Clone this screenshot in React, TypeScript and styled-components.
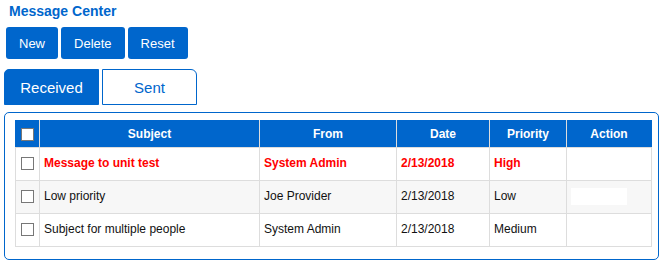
import React from "react";
import styled, { createGlobalStyle } from "styled-components";

const GlobalStyle = createGlobalStyle`
  body {
    margin: 0;
    background: #ffffff;
    font-family: Arial, "Liberation Sans", sans-serif;
  }
`;

const messages = [
  { subject: "Message to unit test", from: "System Admin", date: "2/13/2018", priority: "High", unread: true },
  { subject: "Low priority", from: "Joe Provider", date: "2/13/2018", priority: "Low", unread: false, action: true },
  { subject: "Subject for multiple people", from: "System Admin", date: "2/13/2018", priority: "Medium", unread: false },
];

export default function App() {
  return (
    <>
      <GlobalStyle />
      <Page>
        <Title>Message Center</Title>
        <Toolbar>
          <ActionButton>New</ActionButton>
          <ActionButton>Delete</ActionButton>
          <ActionButton>Reset</ActionButton>
        </Toolbar>
        <Tabs>
          <Tab $active $side="left">Received</Tab>
          <Tab $side="right">Sent</Tab>
        </Tabs>
        <Panel>
          <Grid>
            <colgroup>
              <col style={{ width: 24 }} />
              <col style={{ width: 220 }} />
              <col style={{ width: 137 }} />
              <col style={{ width: 93 }} />
              <col style={{ width: 77 }} />
              <col style={{ width: 85 }} />
            </colgroup>
            <thead>
              <tr>
                <HeadCell><Check /></HeadCell>
                <HeadCell>Subject</HeadCell>
                <HeadCell>From</HeadCell>
                <HeadCell>Date</HeadCell>
                <HeadCell>Priority</HeadCell>
                <HeadCell>Action</HeadCell>
              </tr>
            </thead>
            <tbody>
              {messages.map((m, i) => (
                <Row key={i} $striped={i % 2 === 1}>
                  <Cell $center><Check /></Cell>
                  <Cell $unread={m.unread}>{m.subject}</Cell>
                  <Cell $unread={m.unread}>{m.from}</Cell>
                  <Cell $unread={m.unread}>{m.date}</Cell>
                  <Cell $unread={m.unread}>{m.priority}</Cell>
                  <Cell>{m.action && <BlankAction />}</Cell>
                </Row>
              ))}
            </tbody>
          </Grid>
        </Panel>
      </Page>
    </>
  );
}

const Page = styled.div`
  width: 664px;
  height: 262px;
  padding: 3px 0 0 4px;
  box-sizing: border-box;
`;

const Title = styled.div`
  padding-left: 5px;
  font-size: 14px;
  font-weight: 700;
  line-height: 16px;
  color: #0066cc;
`;

const Toolbar = styled.div`
  display: flex;
  gap: 3px;
  margin: 8px 0 0 2px;
`;

const ActionButton = styled.button`
  height: 32px;
  padding: 0 13px;
  border: none;
  border-radius: 3px;
  background: #0066cc;
  color: #ffffff;
  font-family: Arial, "Liberation Sans", sans-serif;
  font-size: 13px;
  cursor: pointer;
`;

const Tabs = styled.div`
  display: flex;
  gap: 3px;
  margin-top: 10px;
`;

const Tab = styled.div<{ $active?: boolean; $side: "left" | "right" }>`
  width: 95px;
  height: 36px;
  box-sizing: border-box;
  display: flex;
  align-items: center;
  justify-content: center;
  font-size: 15px;
  border: 1px solid #0066cc;
  border-radius: ${({ $side }) => ($side === "left" ? "5px 0 0 0" : "0 6px 0 0")};
  background: ${({ $active }) => ($active ? "#0066cc" : "#ffffff")};
  color: ${({ $active }) => ($active ? "#ffffff" : "#0066cc")};
`;

const Panel = styled.div`
  width: 655px;
  height: 148px;
  box-sizing: border-box;
  margin-top: 7px;
  padding: 7px 0 0 10px;
  border: 1px solid #0066cc;
  border-radius: 5px;
`;

const Grid = styled.table`
  width: 636px;
  border-collapse: collapse;
  table-layout: fixed;
`;

const HeadCell = styled.th`
  height: 27px;
  padding: 0;
  background: #0066cc;
  color: #ffffff;
  font-size: 12px;
  font-weight: 700;
  text-align: center;
  border: 1px solid #dddddd;
  border-top: none;
  &:first-child { border-left-color: #0066cc; }
  &:last-child { border-right-color: #0066cc; }
`;

const Row = styled.tr<{ $striped: boolean }>`
  height: 33px;
  background: ${({ $striped }) => ($striped ? "#f7f7f7" : "#ffffff")};
`;

const Cell = styled.td<{ $unread?: boolean; $center?: boolean }>`
  padding: 0 4px 2px;
  border: 1px solid #dddddd;
  font-size: 12px;
  text-align: ${({ $center }) => ($center ? "center" : "left")};
  color: ${({ $unread }) => ($unread ? "#ff0000" : "#111111")};
  font-weight: ${({ $unread }) => ($unread ? 700 : 400)};
  white-space: nowrap;
`;

const Check = styled.span`
  display: inline-block;
  width: 13px;
  height: 13px;
  box-sizing: border-box;
  border: 1px solid #777777;
  background: #ffffff;
  vertical-align: middle;
`;

const BlankAction = styled.div`
  width: 56px;
  height: 17px;
  background: #ffffff;
`;
